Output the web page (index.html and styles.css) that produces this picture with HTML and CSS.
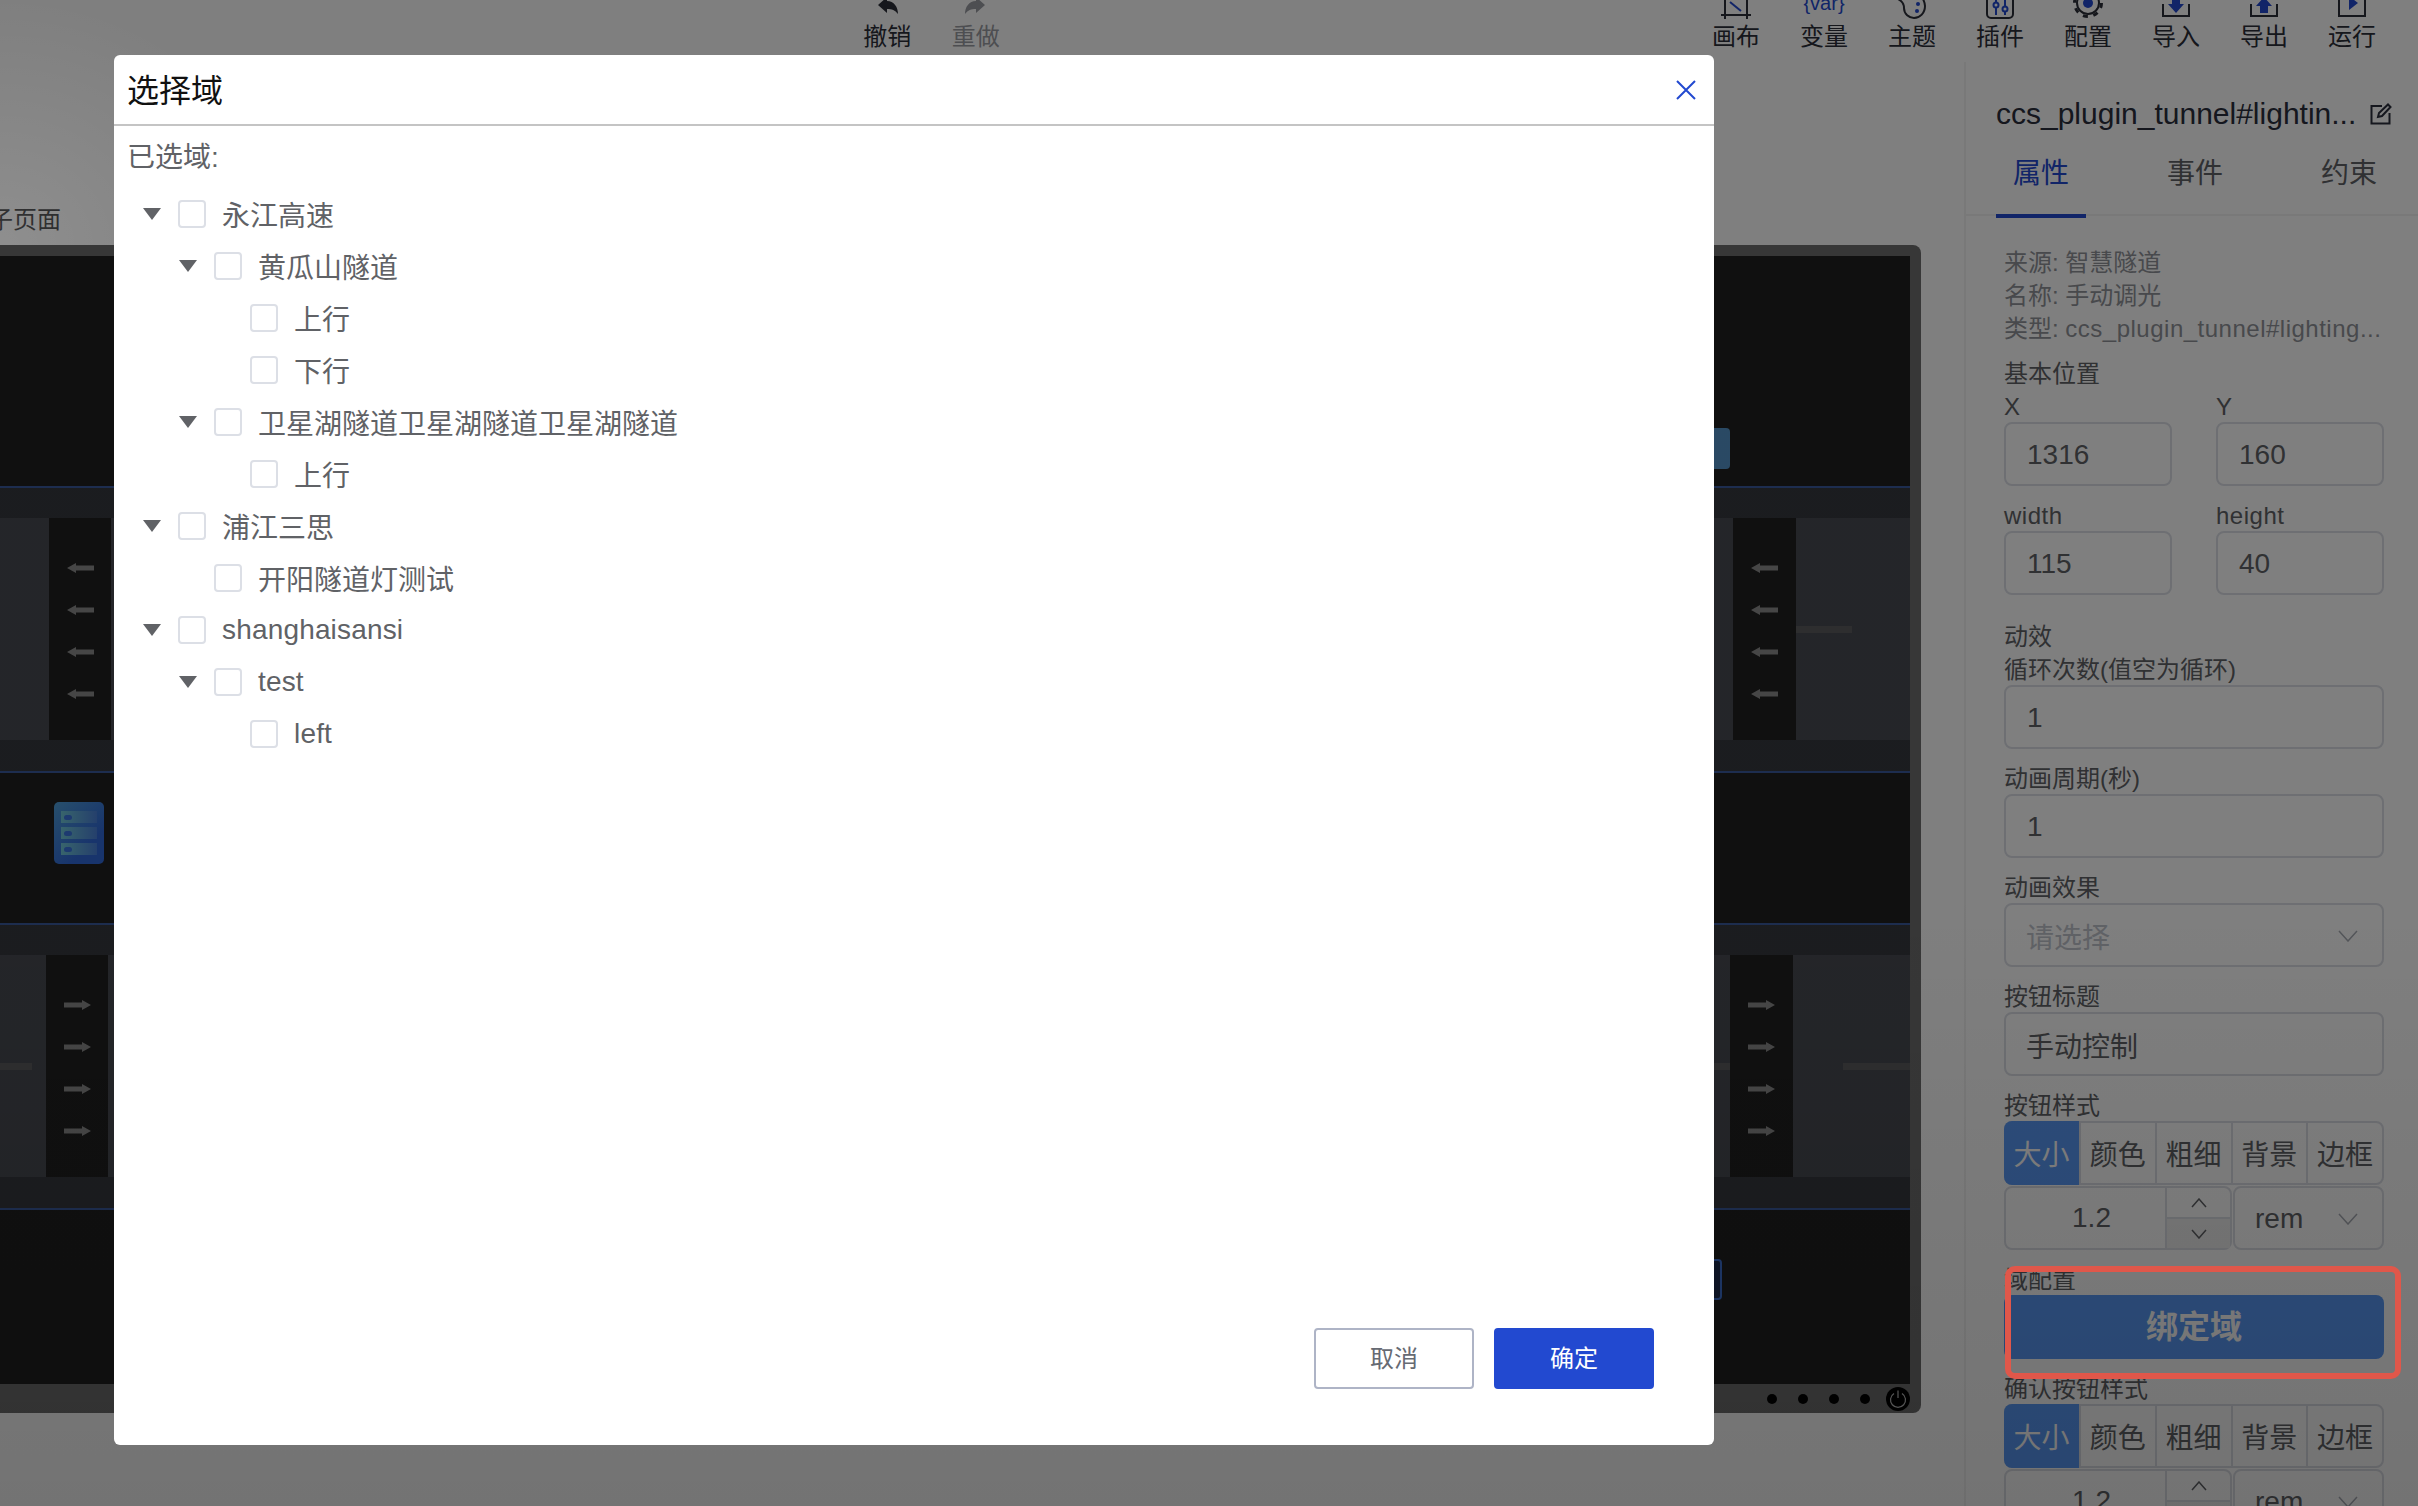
FILE: index.html
```html
<!DOCTYPE html>
<html lang="zh-CN">
<head>
  <meta charset="UTF-8" />
  <title>选择域</title>
  <link rel="stylesheet" href="styles.css">
</head>
<body>

<div class="page">
  <div class="toolbar">
    <div class="tool-group history">
      <div class="tool">
        <svg viewBox="0 0 36 36"><path class="solid" d="M9 21 L18 13 V17 C25 17 29 23 29 30 C26 26 23 25 18 25 V29 Z"/></svg>
        <span>撤销</span>
      </div>
      <div class="tool disabled">
        <svg viewBox="0 0 36 36"><path class="solid" transform="translate(36 0) scale(-1 1)" d="M9 21 L18 13 V17 C25 17 29 23 29 30 C26 26 23 25 18 25 V29 Z"/></svg>
        <span>重做</span>
      </div>
    </div>
    <div class="tool-group">
      <div class="tool">
        <svg viewBox="0 0 36 36"><path class="line" d="M3 31 H33 M7 0 V35 M29 0 V35"/><path class="accent-line" d="M12 18 L23 27"/></svg>
        <span>画布</span>
      </div>
      <div class="tool">
        <svg viewBox="0 0 36 36"><text class="var-text" x="18" y="26">{var}</text></svg>
        <span>变量</span>
      </div>
      <div class="tool">
        <svg viewBox="0 0 36 36"><path class="line" d="M4 15 C8 17 10 20 10 24 C10 30 15 34 20 34 C26 34 31 29 31 22 C31 20 30 17 29 15"/><circle class="accent" cx="24" cy="20" r="2"/><circle class="accent" cx="23" cy="27" r="2"/></svg>
        <span>主题</span>
      </div>
      <div class="tool">
        <svg viewBox="0 0 36 36"><rect class="line" x="5" y="-10" width="26" height="44" rx="4"/><path class="accent-line" d="M14 10 V31 M23 10 V31"/><circle class="accent-ring" cx="14" cy="21" r="2.5"/><circle class="accent-ring" cx="23" cy="25" r="2.5"/></svg>
        <span>插件</span>
      </div>
      <div class="tool">
        <svg viewBox="0 0 36 36"><circle class="line" cx="18" cy="19" r="11"/><circle class="teeth" cx="18" cy="19" r="13.5"/><circle class="accent" cx="18" cy="19" r="5"/></svg>
        <span>配置</span>
      </div>
      <div class="tool">
        <svg viewBox="0 0 36 36"><path class="line" d="M5 20 V32 H31 V20"/><path class="accent" d="M14 12 H22 V20 H26 L18 29 L10 20 H14 Z"/></svg>
        <span>导入</span>
      </div>
      <div class="tool">
        <svg viewBox="0 0 36 36"><path class="line" d="M5 20 V32 H31 V20"/><path class="accent" d="M18 13 L26 22 H22 V29 H14 V22 H10 Z"/></svg>
        <span>导出</span>
      </div>
      <div class="tool">
        <svg viewBox="0 0 36 36"><path class="line" d="M5 0 V32 H31 V0"/><path class="accent" d="M15 12 L24 19 L15 26 Z"/></svg>
        <span>运行</span>
      </div>
    </div>
  </div>

  <div class="workspace">
    <div class="stage">
      <div class="stage-title">子页面</div>
      <div class="frame">
        <div class="screen">
          <div class="zone zone-a"><div class="widget widget-on"></div></div>
          <div class="band"></div>
          <div class="road-row">
            <div class="road road-a1"></div>
            <div class="lane">
              <svg class="arrow" viewBox="0 0 27 10"><path d="M0 5 L9 0 V2.5 H27 V7.5 H9 V10 Z"/></svg>
              <svg class="arrow" viewBox="0 0 27 10"><path d="M0 5 L9 0 V2.5 H27 V7.5 H9 V10 Z"/></svg>
              <svg class="arrow" viewBox="0 0 27 10"><path d="M0 5 L9 0 V2.5 H27 V7.5 H9 V10 Z"/></svg>
              <svg class="arrow" viewBox="0 0 27 10"><path d="M0 5 L9 0 V2.5 H27 V7.5 H9 V10 Z"/></svg>
            </div>
            <div class="road road-mid"></div>
            <div class="lane lane-wide">
              <svg class="arrow" viewBox="0 0 27 10"><path d="M0 5 L9 0 V2.5 H27 V7.5 H9 V10 Z"/></svg>
              <svg class="arrow" viewBox="0 0 27 10"><path d="M0 5 L9 0 V2.5 H27 V7.5 H9 V10 Z"/></svg>
              <svg class="arrow" viewBox="0 0 27 10"><path d="M0 5 L9 0 V2.5 H27 V7.5 H9 V10 Z"/></svg>
              <svg class="arrow" viewBox="0 0 27 10"><path d="M0 5 L9 0 V2.5 H27 V7.5 H9 V10 Z"/></svg>
            </div>
            <div class="road road-a3"><div class="mark mark-short"></div></div>
          </div>
          <div class="band band-line"></div>
          <div class="zone zone-b">
            <div class="rack">
              <div class="rack-slot"><i></i></div>
              <div class="rack-slot"><i></i></div>
              <div class="rack-slot"><i></i></div>
            </div>
          </div>
          <div class="band"></div>
          <div class="road-row">
            <div class="road road-b1"><div class="mark mark-left"></div></div>
            <div class="lane">
              <svg class="arrow" viewBox="0 0 27 10"><path d="M27 5 L18 0 V2.5 H0 V7.5 H18 V10 Z"/></svg>
              <svg class="arrow" viewBox="0 0 27 10"><path d="M27 5 L18 0 V2.5 H0 V7.5 H18 V10 Z"/></svg>
              <svg class="arrow" viewBox="0 0 27 10"><path d="M27 5 L18 0 V2.5 H0 V7.5 H18 V10 Z"/></svg>
              <svg class="arrow" viewBox="0 0 27 10"><path d="M27 5 L18 0 V2.5 H0 V7.5 H18 V10 Z"/></svg>
            </div>
            <div class="road road-mid road-end"><div class="mark mark-tiny"></div></div>
            <div class="lane lane-wide">
              <svg class="arrow" viewBox="0 0 27 10"><path d="M27 5 L18 0 V2.5 H0 V7.5 H18 V10 Z"/></svg>
              <svg class="arrow" viewBox="0 0 27 10"><path d="M27 5 L18 0 V2.5 H0 V7.5 H18 V10 Z"/></svg>
              <svg class="arrow" viewBox="0 0 27 10"><path d="M27 5 L18 0 V2.5 H0 V7.5 H18 V10 Z"/></svg>
              <svg class="arrow" viewBox="0 0 27 10"><path d="M27 5 L18 0 V2.5 H0 V7.5 H18 V10 Z"/></svg>
            </div>
            <div class="road road-b3 road-end"><div class="mark mark-long"></div></div>
          </div>
          <div class="band band-line"></div>
          <div class="zone zone-c"><div class="widget widget-off"></div></div>
        </div>
        <div class="frame-foot">
          <i class="dot"></i><i class="dot"></i><i class="dot"></i><i class="dot"></i>
          <div class="power">
            <svg viewBox="0 0 24 24"><path d="M8 6.5 A7.5 7.5 0 1 0 16 6.5 M12 3.5 V11"/></svg>
          </div>
        </div>
      </div>
    </div>

    <div class="panel">
      <div class="panel-name">
        <span>ccs_plugin_tunnel#lightin...</span>
        <svg viewBox="0 0 22 22"><path d="M12 3 H1.5 V20.5 H19.5 V10"/><path d="M8 14 L9 10 L18 1.5 L20.5 4 L12 13 Z"/></svg>
      </div>
      <div class="tabs">
        <div class="tab active">属性</div>
        <div class="tab">事件</div>
        <div class="tab">约束</div>
      </div>
      <div class="form">
        <div class="info">来源: 智慧隧道</div>
        <div class="info">名称: 手动调光</div>
        <div class="info">类型: <span class="latin">ccs_plugin_tunnel#lighting...</span></div>

        <div class="label label-group">基本位置</div>
        <div class="pair">
          <div>
            <div class="label">X</div>
            <div class="input">1316</div>
          </div>
          <div>
            <div class="label">Y</div>
            <div class="input">160</div>
          </div>
        </div>
        <div class="pair field">
          <div>
            <div class="label latin">width</div>
            <div class="input">115</div>
          </div>
          <div>
            <div class="label latin">height</div>
            <div class="input">40</div>
          </div>
        </div>

        <div class="label label-section">动效</div>
        <div class="label">循环次数(值空为循环)</div>
        <div class="input">1</div>
        <div class="field">
          <div class="label">动画周期(秒)</div>
          <div class="input">1</div>
        </div>
        <div class="field">
          <div class="label">动画效果</div>
          <div class="input select placeholder input-cn">
            请选择
            <svg class="chevron" viewBox="0 0 20 12"><path d="M1 1 L10 11 L19 1"/></svg>
          </div>
        </div>
        <div class="field">
          <div class="label">按钮标题</div>
          <div class="input input-cn">手动控制</div>
        </div>
        <div class="field">
          <div class="label">按钮样式</div>
          <div class="segments">
            <div class="segment on">大小</div>
            <div class="segment">颜色</div>
            <div class="segment">粗细</div>
            <div class="segment">背景</div>
            <div class="segment">边框</div>
          </div>
          <div class="size-row">
            <div class="stepper">
              <div class="stepper-value">1.2</div>
              <div class="stepper-btns">
                <div class="step"><svg class="chevron-sm" viewBox="0 0 16 10"><path d="M1 9 L8 1 L15 9"/></svg></div>
                <div class="step step-down"><svg class="chevron-sm" viewBox="0 0 16 10"><path d="M1 1 L8 9 L15 1"/></svg></div>
              </div>
            </div>
            <div class="input select unit">
              rem
              <svg class="chevron" viewBox="0 0 20 12"><path d="M1 1 L10 11 L19 1"/></svg>
            </div>
          </div>
        </div>
        <div class="field">
          <div class="label">域配置</div>
          <div class="bind-btn">绑定域</div>
        </div>
        <div class="field">
          <div class="label">确认按钮样式</div>
          <div class="segments">
            <div class="segment on">大小</div>
            <div class="segment">颜色</div>
            <div class="segment">粗细</div>
            <div class="segment">背景</div>
            <div class="segment">边框</div>
          </div>
          <div class="size-row">
            <div class="stepper">
              <div class="stepper-value">1.2</div>
              <div class="stepper-btns">
                <div class="step"><svg class="chevron-sm" viewBox="0 0 16 10"><path d="M1 9 L8 1 L15 9"/></svg></div>
                <div class="step step-down"><svg class="chevron-sm" viewBox="0 0 16 10"><path d="M1 1 L8 9 L15 1"/></svg></div>
              </div>
            </div>
            <div class="input select unit">
              rem
              <svg class="chevron" viewBox="0 0 20 12"><path d="M1 1 L10 11 L19 1"/></svg>
            </div>
          </div>
        </div>
      </div>
    </div>
  </div>

  <div class="mask"></div>
  <div class="callout"></div>

  <div class="dialog">
    <div class="dialog-head">
      <span>选择域</span>
      <svg class="dialog-close" viewBox="0 0 20 20"><path d="M1 1 L19 19 M19 1 L1 19"/></svg>
    </div>
    <div class="dialog-body">
      <div class="picked">已选域:</div>
      <div class="tree">
        <div class="node lv0"><i class="caret"></i><i class="check"></i><span>永江高速</span></div>
        <div class="node lv1"><i class="caret"></i><i class="check"></i><span>黄瓜山隧道</span></div>
        <div class="node lv2"><i class="caret none"></i><i class="check"></i><span>上行</span></div>
        <div class="node lv2"><i class="caret none"></i><i class="check"></i><span>下行</span></div>
        <div class="node lv1"><i class="caret"></i><i class="check"></i><span>卫星湖隧道卫星湖隧道卫星湖隧道</span></div>
        <div class="node lv2"><i class="caret none"></i><i class="check"></i><span>上行</span></div>
        <div class="node lv0"><i class="caret"></i><i class="check"></i><span>浦江三思</span></div>
        <div class="node lv1"><i class="caret none"></i><i class="check"></i><span>开阳隧道灯测试</span></div>
        <div class="node lv0"><i class="caret"></i><i class="check"></i><span class="tree-latin">shanghaisansi</span></div>
        <div class="node lv1"><i class="caret"></i><i class="check"></i><span class="tree-latin">test</span></div>
        <div class="node lv2"><i class="caret none"></i><i class="check"></i><span class="tree-latin">left</span></div>
      </div>
    </div>
    <div class="dialog-foot">
      <div class="btn">取消</div>
      <div class="btn btn-primary">确定</div>
    </div>
  </div>
</div>

</body>
</html>
```

FILE: styles.css
```css
body {
  margin: 0;
  font-family: "Liberation Sans", "Noto Sans CJK SC", sans-serif;
  color: #606266;
  background: #fff;
}

.page {
  position: relative;
  width: 2418px;
  height: 1506px;
  overflow: hidden;
  background: #fff;
}

/* toolbar */
.toolbar {
  height: 62px;
  display: flex;
  justify-content: space-between;
  padding: 0 22px 0 843px;
  box-sizing: border-box;
}

.tool-group {
  display: flex;
}

.tool {
  width: 88px;
  display: flex;
  flex-direction: column;
  align-items: center;
  font-size: 24px;
  line-height: 33px;
  color: #2b2e38;
}

.history .tool {
  width: 88.5px;
}

.tool svg {
  width: 36px;
  height: 36px;
  margin-top: -16px;
  flex-shrink: 0;
  overflow: visible;
}

.tool.disabled {
  color: #9a9ca3;
}

.solid {
  fill: currentColor;
}

.line {
  fill: none;
  stroke: #2b2e38;
  stroke-width: 2;
}

.accent {
  fill: #2249d0;
}

.accent-line {
  fill: none;
  stroke: #2249d0;
  stroke-width: 2;
}

.accent-ring {
  fill: #fff;
  stroke: #2249d0;
  stroke-width: 2;
}

.teeth {
  fill: none;
  stroke: #2b2e38;
  stroke-width: 3;
  stroke-dasharray: 5 5.6;
}

.var-text {
  font-size: 20px;
  text-anchor: middle;
  fill: #2249d0;
}

/* workspace */
.workspace {
  display: flex;
  height: 1444px;
}

.stage {
  width: 1964px;
  flex-shrink: 0;
}

.stage-title {
  height: 183px;
  box-sizing: border-box;
  padding-top: 142px;
  margin-left: -11px;
  font-size: 24px;
  line-height: 32px;
  color: #303133;
}

.frame {
  width: 1941px;
  margin-left: -20px;
  height: 1168px;
  background: #6e6e6e;
  border-radius: 0 8px 8px 0;
  padding: 11px 11px 0 0;
  box-sizing: border-box;
}

.screen {
  display: flex;
  flex-direction: column;
  height: 1128px;
  background: #202020;
}

.zone {
  position: relative;
  background: #202020;
}

.zone-a { height: 230px; }
.zone-b { height: 150px; }
.zone-c { flex: 1; }

.band {
  height: 32px;
  box-sizing: border-box;
  background: #36393f;
  border-top: 2px solid #3a5a9e;
}

.band-line {
  height: 33px;
  border-top: none;
  border-bottom: 2px solid #3a5a9e;
}

.road-row {
  display: flex;
  height: 222px;
  background: #484b52;
}

.road {
  display: flex;
  align-items: center;
}

.road-end {
  justify-content: flex-end;
}

.road-mid { flex: 1; }
.road-a1 { width: 69px; }
.road-a3 { width: 114px; }
.road-b1 { width: 66px; }
.road-b3 { width: 117px; }

.lane {
  width: 62px;
  box-sizing: border-box;
  padding-top: 4px;
  display: flex;
  flex-direction: column;
  align-items: center;
  justify-content: center;
  gap: 32.3px;
  background: #202020;
}

.lane-wide {
  width: 63px;
}

.arrow {
  width: 27px;
  height: 10px;
  fill: #8c8c8c;
}

.mark {
  height: 7px;
  background: #5c5c5e;
}

.mark-short { width: 56px; }
.mark-left { width: 52px; }
.mark-tiny { width: 16px; }
.mark-long { width: 67px; }

.widget {
  position: absolute;
  right: 180px;
  width: 40px;
  height: 41px;
  box-sizing: border-box;
  border-radius: 4px;
}

.widget-on {
  top: 172px;
  background: #5493c8;
}

.widget-off {
  top: 49px;
  right: 188px;
  border: 2px solid #3b6fd0;
  background: #1c2a4c;
}

.rack {
  position: absolute;
  left: 74px;
  top: 29px;
  width: 50px;
  height: 62px;
  box-sizing: border-box;
  padding: 9px 7px;
  display: flex;
  flex-direction: column;
  gap: 4px;
  border-radius: 5px;
  background: linear-gradient(135deg, #4f9fd8, #3068d8 70%);
}

.rack-slot {
  height: 12px;
  display: flex;
  align-items: center;
  padding-left: 3px;
  background: linear-gradient(to right, #6fc8d8, #4a80d8);
}

.rack-slot i {
  width: 8px;
  height: 5px;
  border-radius: 3px;
  background: #3a74e0;
}

.frame-foot {
  height: 29px;
  display: flex;
  align-items: center;
  justify-content: flex-end;
  gap: 21px;
}

.dot {
  width: 10px;
  height: 10px;
  border-radius: 50%;
  background: #000;
}

.power {
  width: 24px;
  height: 24px;
  margin-left: -5px;
  border-radius: 50%;
  background: #000;
}

.power svg {
  display: block;
  fill: none;
  stroke: #bbb;
  stroke-width: 1.2;
}

/* right panel */
.panel {
  flex: 1;
  border-left: 2px solid #f2f2f2;
  box-sizing: border-box;
  min-width: 0;
}

.panel-name {
  display: flex;
  align-items: center;
  gap: 14px;
  height: 36px;
  margin: 34px 0 0 30px;
  font-size: 30px;
  color: #2a2e3c;
  white-space: nowrap;
}

.panel-name svg {
  width: 22px;
  height: 22px;
  fill: none;
  stroke: #2a2e3c;
  stroke-width: 2;
}

.tabs {
  display: flex;
  gap: 64px;
  height: 82px;
  padding-left: 30px;
  border-bottom: 2px solid #f2f2f2;
}

.tab {
  width: 90px;
  height: 82px;
  text-align: center;
  font-size: 28px;
  line-height: 84px;
  color: #606266;
}

.tab.active {
  color: #2249d0;
  border-bottom: 4px solid #2249d0;
}

.form {
  padding: 29px 34px 0 38px;
}

.info {
  height: 33px;
  font-size: 24px;
  line-height: 35px;
  color: #909399;
  white-space: nowrap;
}

.label {
  height: 33px;
  font-size: 24px;
  line-height: 35px;
  color: #606266;
  white-space: nowrap;
}

.latin {
  letter-spacing: 0.5px;
}

.label-group {
  margin-top: 12px;
}

.label-section {
  margin-top: 24px;
}

.pair {
  display: flex;
  justify-content: space-between;
}

.pair > div {
  width: 168px;
}

.field {
  margin-top: 12px;
}

.input {
  height: 64px;
  box-sizing: border-box;
  border: 2px solid #dcdfe6;
  border-radius: 8px;
  padding: 1px 0 0 21px;
  display: flex;
  align-items: center;
  font-size: 28px;
  color: #606266;
}

.input-cn {
  padding-left: 20px;
}

.select {
  justify-content: space-between;
  padding-right: 24px;
}

.placeholder {
  color: #c0c4cc;
}

.chevron {
  width: 20px;
  height: 12px;
  fill: none;
  stroke: #a8acb4;
  stroke-width: 1.5;
}

.chevron-sm {
  width: 16px;
  height: 10px;
  fill: none;
  stroke: #606266;
  stroke-width: 1.5;
}

.segments {
  display: flex;
  height: 64px;
  box-sizing: border-box;
  border: 2px solid #dcdfe6;
  border-radius: 8px;
}

.segment {
  flex: 1;
  display: flex;
  align-items: center;
  justify-content: center;
  font-size: 28px;
  border-left: 2px solid #dcdfe6;
}

.segment:first-child {
  border-left: none;
}

.segment.on {
  flex: none;
  width: 75px;
  margin: -2px 0 -2px -2px;
  border-radius: 8px 0 0 8px;
  background: #5a9af8;
  color: #fff;
}

.size-row {
  display: flex;
  margin-top: 1px;
  gap: 1px;
}

.stepper {
  width: 228px;
  height: 64px;
  box-sizing: border-box;
  border: 2px solid #dcdfe6;
  border-radius: 8px;
  display: flex;
}

.stepper-value {
  flex: 1;
  padding-left: 12px;
  text-align: center;
  font-size: 28px;
  line-height: 60px;
}

.stepper-btns {
  width: 63px;
  display: flex;
  flex-direction: column;
  border-left: 2px solid #dcdfe6;
}

.step {
  flex: 1;
  display: flex;
  align-items: center;
  justify-content: center;
}

.step-down {
  border-top: 2px solid #dcdfe6;
  background: #f0f0f0;
}

.unit {
  flex: 1;
  padding-left: 20px;
}

.bind-btn {
  height: 64px;
  border-radius: 8px;
  background: #5a9af8;
  color: #fff;
  font-size: 32px;
  font-weight: 700;
  line-height: 64px;
  text-align: center;
}

/* modal */
.mask {
  position: absolute;
  inset: 0;
  background: linear-gradient(to bottom, rgba(0, 0, 0, 0.5) 0, rgba(0, 0, 0, 0.5) 60%, rgba(0, 0, 0, 0.55) 100%);
}

.mask::before {
  content: "";
  position: absolute;
  left: 0;
  top: 0;
  width: 280px;
  height: 245px;
  background: radial-gradient(ellipse at 0 100%, rgba(255, 255, 255, 0.12), transparent 72%);
}

.callout {
  position: absolute;
  left: 2005px;
  top: 1266px;
  width: 396px;
  height: 113px;
  box-sizing: border-box;
  border: 6px solid #e0574a;
  border-radius: 10px;
}

.dialog {
  position: absolute;
  left: 114px;
  top: 55px;
  width: 1600px;
  height: 1390px;
  display: flex;
  flex-direction: column;
  border-radius: 6px;
  background: #fff;
}

.dialog-head {
  height: 71px;
  flex-shrink: 0;
  box-sizing: border-box;
  padding: 0 18px 0 13px;
  display: flex;
  align-items: center;
  justify-content: space-between;
  border-bottom: 2px solid #c4c4c4;
  font-size: 32px;
  color: #111;
}

.dialog-head span {
  margin-bottom: 4px;
}

.dialog-close {
  width: 20px;
  height: 20px;
  fill: none;
  stroke: #2249d0;
  stroke-width: 2;
}

.dialog-body {
  flex: 1;
  padding: 12px 13px 0;
}

.picked {
  font-size: 28px;
  line-height: 40px;
}

.tree {
  margin: 10px 0 0 -13px;
}

.node {
  display: flex;
  align-items: center;
  height: 52px;
  font-size: 28px;
}

.tree-latin {
  letter-spacing: 0.17px;
}

.lv0 { padding-left: 29px; }
.lv1 { padding-left: 65px; }
.lv2 { padding-left: 101px; }

.caret {
  width: 0;
  height: 0;
  border-left: 9px solid transparent;
  border-right: 9px solid transparent;
  border-top: 12px solid #606266;
  margin-right: 17px;
}

.caret.none {
  border-top-color: transparent;
}

.check {
  width: 28px;
  height: 28px;
  box-sizing: border-box;
  border: 2px solid #dcdfe6;
  border-radius: 4px;
  margin-right: 16px;
}

.dialog-foot {
  display: flex;
  justify-content: flex-end;
  gap: 20px;
  padding: 0 60px 56px 0;
}

.btn {
  width: 160px;
  height: 61px;
  box-sizing: border-box;
  border: 2px solid #aeb4c6;
  border-radius: 4px;
  text-align: center;
  font-size: 24px;
  line-height: 57px;
  color: #666a73;
}

.btn-primary {
  border-color: #2249d0;
  background: #2249d0;
  color: #fff;
}
```
